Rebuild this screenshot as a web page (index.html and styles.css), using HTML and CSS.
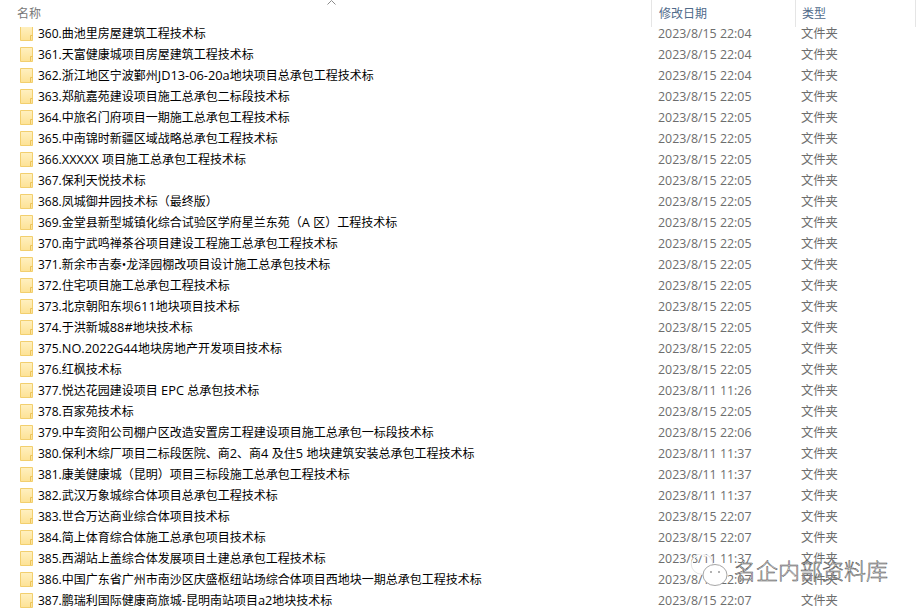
FILE: index.html
```html
<!DOCTYPE html>
<html lang="zh-CN">
<head>
    <meta charset="UTF-8">
    <title>文件夹列表</title>
    <link rel="stylesheet" href="styles.css">
</head>
<body>
    <div class="explorer">
        <!-- Column headers -->
        <div class="row header">
            <div class="col-name">名称</div>
            <div class="col-date">修改日期</div>
            <div class="col-type">类型</div>
            <svg class="sort-arrow" width="9" height="5" viewBox="0 0 9 5"><path d="M0.5 4.5L4.5 0.5L8.5 4.5" fill="none" stroke="#8a8a8a"/></svg>
        </div>

        <div id="rows" class="rows"></div>

        <!-- Watermark -->
        <div class="watermark">
            <svg width="40" height="32" viewBox="0 0 40 32">
                <ellipse cx="12" cy="10" rx="10" ry="9.5" fill="none" stroke="#fff" stroke-width="1.5"/>
                <ellipse cx="12" cy="10" rx="10.8" ry="10.3" fill="none" stroke="#bbb" stroke-width="0.4"/>
                <ellipse cx="25" cy="21" rx="12" ry="10.5" fill="#fff" stroke="#8f8f8f" stroke-width="0.8"/>
                <circle cx="21" cy="18" r="1" fill="#999"/>
                <circle cx="29" cy="18" r="1" fill="#999"/>
            </svg>
            <span class="watermark-text">名企内部资料库</span>
        </div>
    </div>
    <script>
        const folders = [
            ["360.", "曲池里房屋建筑工程技术标", "2023/8/15 22:04"],
            ["361.", "天富健康城项目房屋建筑工程技术标", "2023/8/15 22:04"],
            ["362.", "浙江地区宁波鄞州JD13-06-20a地块项目总承包工程技术标", "2023/8/15 22:04"],
            ["363.", "郑航嘉苑建设项目施工总承包二标段技术标", "2023/8/15 22:05"],
            ["364.", "中旅名门府项目一期施工总承包工程技术标", "2023/8/15 22:05"],
            ["365.", "中南锦时新疆区域战略总承包工程技术标", "2023/8/15 22:05"],
            ["366.", "XXXXX 项目施工总承包工程技术标", "2023/8/15 22:05"],
            ["367.", "保利天悦技术标", "2023/8/15 22:05"],
            ["368.", "凤城御井园技术标（最终版）", "2023/8/15 22:05"],
            ["369.", "金堂县新型城镇化综合试验区学府星兰东苑（A 区）工程技术标", "2023/8/15 22:05"],
            ["370.", "南宁武鸣禅茶谷项目建设工程施工总承包工程技术标", "2023/8/15 22:05"],
            ["371.", "新余市吉泰•龙泽园棚改项目设计施工总承包技术标", "2023/8/15 22:05"],
            ["372.", "住宅项目施工总承包工程技术标", "2023/8/15 22:05"],
            ["373.", "北京朝阳东坝611地块项目技术标", "2023/8/15 22:05"],
            ["374.", "于洪新城88#地块技术标", "2023/8/15 22:05"],
            ["375.", "NO.2022G44地块房地产开发项目技术标", "2023/8/15 22:05"],
            ["376.", "红枫技术标", "2023/8/15 22:05"],
            ["377.", "悦达花园建设项目 EPC 总承包技术标", "2023/8/11 11:26"],
            ["378.", "百家苑技术标", "2023/8/15 22:05"],
            ["379.", "中车资阳公司棚户区改造安置房工程建设项目施工总承包一标段技术标", "2023/8/15 22:06"],
            ["380.", "保利木综厂项目二标段医院、商2、商4 及住5 地块建筑安装总承包工程技术标", "2023/8/11 11:37"],
            ["381.", "康美健康城（昆明）项目三标段施工总承包工程技术标", "2023/8/11 11:37"],
            ["382.", "武汉万象城综合体项目总承包工程技术标", "2023/8/11 11:37"],
            ["383.", "世合万达商业综合体项目技术标", "2023/8/15 22:07"],
            ["384.", "简上体育综合体施工总承包项目技术标", "2023/8/15 22:07"],
            ["385.", "西湖站上盖综合体发展项目土建总承包工程技术标", "2023/8/11 11:37"],
            ["386.", "中国广东省广州市南沙区庆盛枢纽站场综合体项目西地块一期总承包工程技术标", "2023/8/15 22:07"],
            ["387.", "鹏瑞利国际健康商旅城-昆明南站项目a2地块技术标", "2023/8/15 22:07"]
        ];

        const folderIcon = '<svg class="folder" width="13" height="15" viewBox="0 0 13 15">' +
            '<defs><linearGradient id="fg" x1="0" y1="0" x2="0" y2="1"><stop offset="0" stop-color="#fff0c0"/><stop offset="1" stop-color="#fde295"/></linearGradient></defs>' +
            '<path d="M0.5 0.5H12.5V14.5H0.5Z" fill="url(#fg)" stroke="#f2cf6e"/>' +
            '<path d="M10.5 14V9.5H12.5" fill="none" stroke="#ecc358"/>' +
            '</svg>';

        // latin runs inside a name are a bit wider than the number prefix
        function nameHtml(text) {
            return text.replace(/[A-Za-z0-9#.\- ]+/g, run => '<span class="latin">' + run + '</span>');
        }

        const rows = document.getElementById('rows');
        folders.forEach(item => {
            const row = document.createElement('div');
            row.className = 'row';
            row.innerHTML = '<div class="col-name">' + folderIcon + '<span>' + item[0] + nameHtml(item[1]) + '</span></div>' +
                '<div class="col-date">' + item[2] + '</div>' +
                '<div class="col-type">文件夹</div>';
            rows.appendChild(row);
        });
    </script>
</body>
</html>
```

FILE: styles.css
```css
html, body {
    margin: 0;
    padding: 0;
    height: 100%;
    overflow: hidden;
    background: #fff;
}

body {
    font-family: "Open Sans", "Noto Sans CJK SC", sans-serif;
    font-size: 12px;
    color: #000;
}

.explorer {
    position: relative;
    height: 610px;
    overflow: hidden;
}

.row {
    display: flex;
    align-items: center;
    height: 21px;
    line-height: 21px;
    white-space: nowrap;
}

.header {
    position: relative;
    z-index: 1;
    height: 27px;
    background: #fff;
}

.rows {
    margin-top: -4px;
}

.latin {
    font-size: 12.8px;
}

.col-name {
    display: flex;
    align-items: center;
    width: 651px;
    padding-left: 20px;
    box-sizing: border-box;
    flex-shrink: 0;
}

.header .col-name {
    padding-left: 17px;
    color: #777;
}

.col-date {
    width: 144px;
    padding-left: 7px;
    box-sizing: border-box;
    flex-shrink: 0;
    color: #6d6d6d;
    font-size: 12.4px;
}

.col-type {
    flex: 1;
    padding-left: 6px;
    color: #6d6d6d;
    font-size: 12.3px;
}

.header .col-date,
.header .col-type {
    height: 27px;
    line-height: 28px;
    font-size: 12px;
    color: #4f6a8a;
    border-left: 1px solid #e5e5e5;
}

.header .col-type {
    border-right: 1px solid #e5e5e5;
}

.folder {
    margin-right: 5px;
    flex-shrink: 0;
}

.sort-arrow {
    position: absolute;
    left: 327px;
    top: 0;
}

.watermark {
    position: absolute;
    left: 690px;
    top: 554px;
    display: flex;
    align-items: center;
    gap: 4px;
}

.watermark-text {
    font-size: 22px;
    line-height: 30px;
    font-weight: 300;
    color: #fff;
    -webkit-text-stroke: 0.5px #444;
}
```
